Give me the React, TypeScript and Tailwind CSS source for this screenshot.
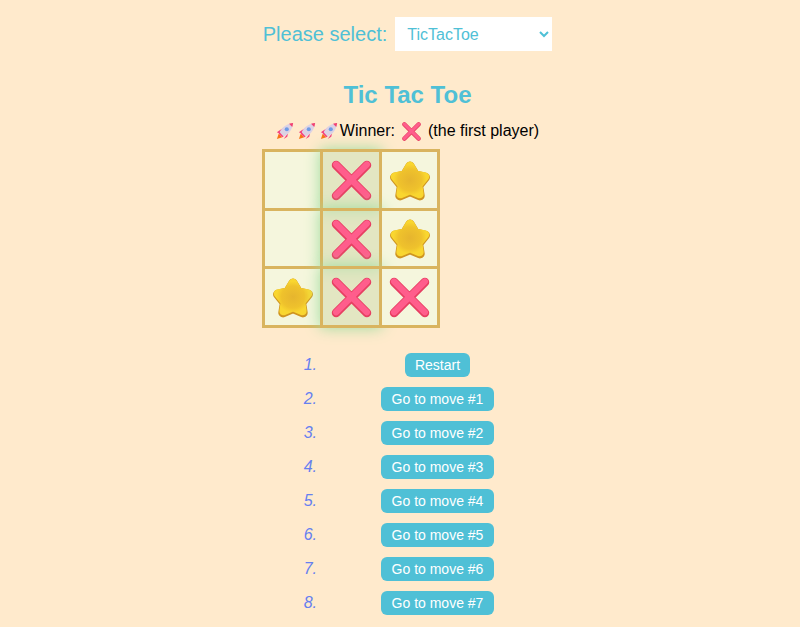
import { useState } from "react";

const cyan = "text-[#4fc0d6]";

const Rocket = () => (
  <svg viewBox="0 0 20 20" className="h-[18px] w-[18px] shrink-0">
    <path d="M3 13 L1 19 L7 17 Z" fill="#f97316" />
    <path d="M4.500 9 L1 11.500 L4.500 13 L8 7 Z" fill="#f43f7f" />
    <path d="M11 15.500 L8.500 19 L12.500 16.500 L13.500 12 Z" fill="#f43f7f" />
    <path d="M4 11.500 C6.500 5.500 12 1.800 19 1 C18.200 8 14.500 13.500 8.500 16 Z" fill="#dcd2e4" />
    <path d="M14.500 2 C16 1.500 17.500 1.200 19 1 C18.800 2.800 18.500 4.200 18 5.500 Z" fill="#f43f6f" />
    <circle cx="12" cy="8" r="2.300" fill="#6f9be6" />
    <path d="M4 11.500 L8.500 16 L7 17 L3 13 Z" fill="#f43f7f" />
  </svg>
);

const Cross = ({ className, width = 8.5 }: { className: string; width?: number }) => (
  <svg viewBox="0 0 40 40" className={className}>
    <path d="M5 5 L35 35 M35 5 L5 35" stroke="#e63f62" strokeWidth={width} strokeLinecap="round" />
    <path d="M5 4.400 L35 34.400 M35 4.400 L5 34.400" stroke="#ff5d8c" strokeWidth={width - 2.5} strokeLinecap="round" />
  </svg>
);

const Star = () => (
  <svg viewBox="0 0 40 40" className="h-[42px] w-[42px]">
    <defs>
      <radialGradient id="starFill" cx="50%" cy="50%" r="55%">
        <stop offset="0%" stopColor="#e6b52e" />
        <stop offset="70%" stopColor="#efc22c" />
        <stop offset="100%" stopColor="#f9d62f" />
      </radialGradient>
    </defs>
    <path
      d="M20 6 L25 14.500 L34.500 16.500 L28 24.500 L29.500 34 L20 30 L10.500 34 L12 24.500 L5.500 16.500 L15 14.500 Z"
      fill="#cf9520"
      stroke="#cf9520"
      strokeWidth="9"
      strokeLinejoin="round"
    />
    <path
      d="M20 5.500 L25 13.800 L34.300 15.800 L27.800 23.800 L29 32.500 L20 28.800 L11 32.500 L12.200 23.800 L5.700 15.800 L15 13.800 Z"
      fill="url(#starFill)"
      stroke="url(#starFill)"
      strokeWidth="8"
      strokeLinejoin="round"
    />
  </svg>
);

const board = ["", "X", "O", "", "X", "O", "O", "X", "X"];
const winning = [1, 4, 7];
const moves = ["Restart", "Go to move #1", "Go to move #2", "Go to move #3", "Go to move #4", "Go to move #5", "Go to move #6", "Go to move #7"];

const App = () => {
  const [game, setGame] = useState("TicTacToe");

  return (
    <div className="flex h-[627px] flex-col items-center overflow-hidden bg-[#ffeacc] pl-[15px] font-['Liberation_Sans',Arial,sans-serif]">
      <div className="mt-[17px] flex h-[34px] items-center">
        <label className={`text-xl ${cyan}`}>Please select:</label>
        <select
          value={game}
          onChange={(e) => setGame(e.target.value)}
          className={`ml-2 h-[34px] w-[157px] bg-white pl-2 text-base ${cyan}`}>
          <option>TicTacToe</option>
        </select>
      </div>

      <h1 className={`mt-[29px] text-2xl leading-[30px] font-bold ${cyan}`}>Tic Tac Toe</h1>

      <div className="mt-[9px] flex h-[24px] items-center text-base text-black">
        <span className="mr-[2px] flex items-center gap-1">
          <Rocket />
          <Rocket />
          <Rocket />
        </span>
        <span>Winner:</span>
        <Cross className="mx-[7px] h-[19px] w-[19px]" width={9} />
        <span>(the first player)</span>
      </div>

      <div className="mt-[6px] w-[292px]">
        {/* cells overlap by one border so the lines stay 3px */}
        <div className="grid w-[178.5px] grid-cols-[repeat(3,58.5px)] grid-rows-[repeat(3,58.5px)]">
          {board.map((cell, i) => (
            <div
              key={i}
              className={`-mr-[3px] -mb-[3px] flex items-center justify-center border-[3px] border-[#d9b45f] pt-[2px] pl-[1px] ${
                winning.includes(i)
                  ? "bg-[#d0e3bb]/60 shadow-[0_0_14px_#9fdc9f]"
                  : "bg-[#f5f6dd]"
              }`}>
              {cell === "X" && <Cross className="h-[41px] w-[41px]" />}
              {cell === "O" && <Star />}
            </div>
          ))}
        </div>

        <ol className="mt-[28px] list-decimal pl-[60px]">
          {moves.map((move) => (
            <li key={move} className="h-[34px] text-center italic text-[#6680f0]">
              <button className="h-[24px] rounded-md bg-[#4fc0d6] px-[10.25px] text-sm text-white not-italic">
                {move}
              </button>
            </li>
          ))}
        </ol>
      </div>
    </div>
  );
};

export default App;
